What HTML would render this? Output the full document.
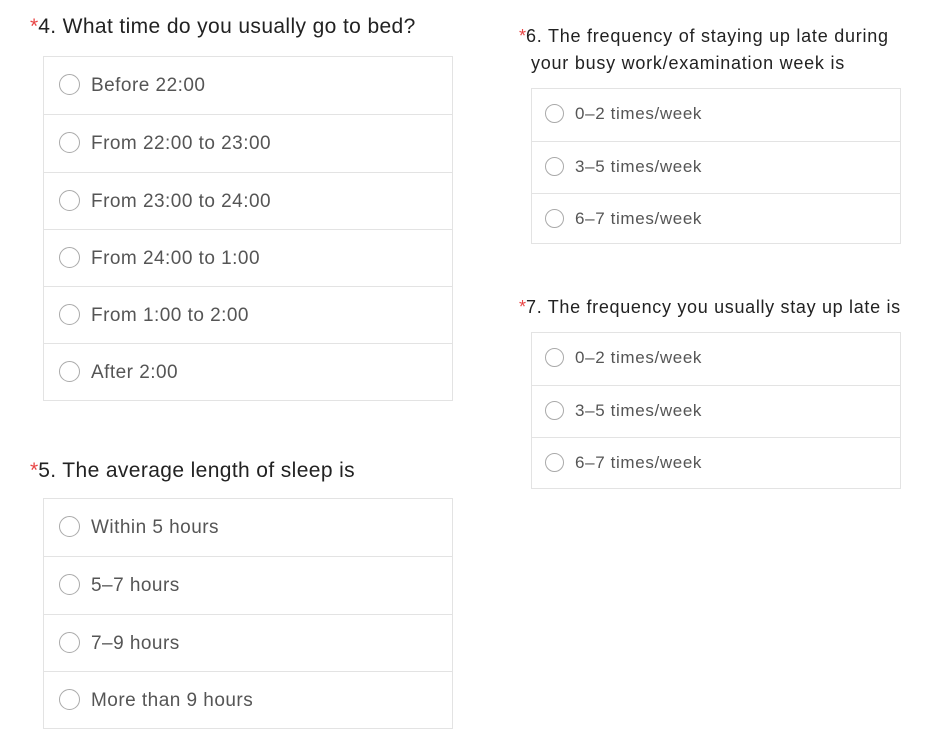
<!DOCTYPE html>
<html><head><meta charset="utf-8"><style>
body{margin:0;width:944px;height:748px;background:#fff;font-family:"Liberation Sans",sans-serif;position:relative;overflow:hidden}
.t{position:absolute;color:#222;white-space:nowrap}
.t b{color:#e84545;font-weight:normal;letter-spacing:0}
.box{position:absolute;border:1px solid #e3e3e3;box-sizing:border-box}
.row{border-top:1px solid #e3e3e3;box-sizing:border-box;position:relative;color:#555}
.row:first-child{border-top:none}
.row i{position:absolute;border:1.5px solid #aaa;border-radius:50%;box-sizing:border-box}
.L .row{height:57.3px;font-size:19px;letter-spacing:0.47px}
.L .row i{left:15px;top:17px;width:21px;height:21px}
.L .row span{position:absolute;left:47px;top:18px}
.R .row{height:52px;font-size:17px;letter-spacing:0.64px}
.R .row i{left:13px;top:15px;width:19px;height:19px}
.R .row span{position:absolute;left:43px;top:15px}
</style></head><body>
<div class="t" style="left:30px;top:15px;font-size:21px;letter-spacing:0.38px"><b>*</b>4. What time do you usually go to bed?</div>
<div class="box L" style="left:43px;top:56px;width:410px;height:345px">
<div class="row"><i></i><span>Before 22:00</span></div>
<div class="row"><i></i><span>From 22:00 to 23:00</span></div>
<div class="row"><i></i><span>From 23:00 to 24:00</span></div>
<div class="row"><i></i><span>From 24:00 to 1:00</span></div>
<div class="row"><i></i><span>From 1:00 to 2:00</span></div>
<div class="row"><i></i><span>After 2:00</span></div>
</div>
<div class="t" style="left:30px;top:459px;font-size:21px;letter-spacing:0.38px"><b>*</b>5. The average length of sleep is</div>
<div class="box L" style="left:43px;top:498px;width:410px;height:231px">
<div class="row"><i></i><span>Within 5 hours</span></div>
<div class="row"><i></i><span>5–7 hours</span></div>
<div class="row"><i></i><span>7–9 hours</span></div>
<div class="row"><i></i><span>More than 9 hours</span></div>
</div>
<div class="t" style="left:519px;top:23px;font-size:18px;line-height:27px;letter-spacing:0.76px"><b>*</b>6. The frequency of staying up late during<br><span style="padding-left:12px">your busy work/examination week is</span></div>
<div class="box R" style="left:531px;top:88px;width:370px;height:156px">
<div class="row"><i></i><span>0–2 times/week</span></div>
<div class="row"><i></i><span>3–5 times/week</span></div>
<div class="row"><i></i><span>6–7 times/week</span></div>
</div>
<div class="t" style="left:519px;top:297px;font-size:18px;letter-spacing:0.68px"><b>*</b>7. The frequency you usually stay up late is</div>
<div class="box R" style="left:531px;top:332px;width:370px;height:157px">
<div class="row"><i></i><span>0–2 times/week</span></div>
<div class="row"><i></i><span>3–5 times/week</span></div>
<div class="row"><i></i><span>6–7 times/week</span></div>
</div>
</body></html>
